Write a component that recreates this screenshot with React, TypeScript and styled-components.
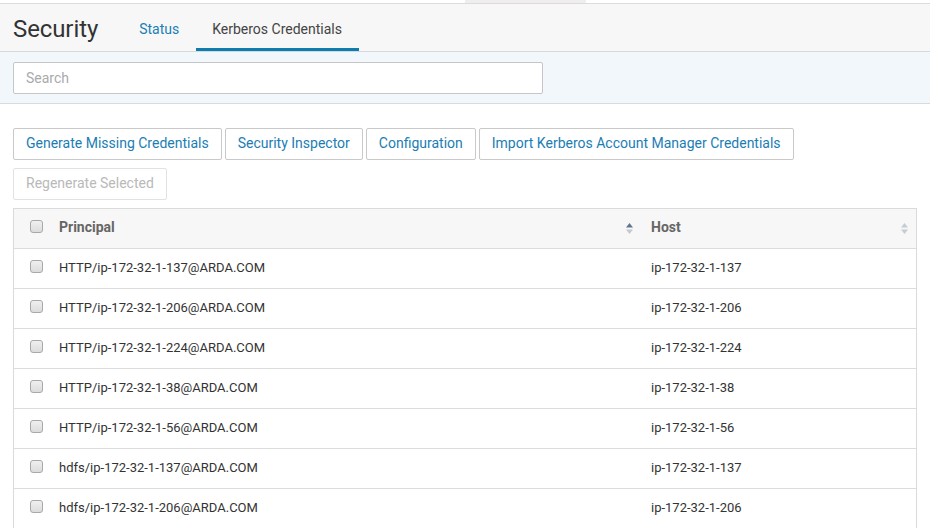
import React from "react";
import styled, { createGlobalStyle } from "styled-components";

const Global = createGlobalStyle`
  html, body { margin: 0; padding: 0; background: #fff; }
  body { font-family: Roboto, "Liberation Sans", Arial, sans-serif; color: #333; }
  * { box-sizing: border-box; }
`;

const Page = styled.div`
  width: 930px;
  height: 528px;
  overflow: hidden;
  background: #fff;
`;

const TopStrip = styled.div`
  height: 3px;
  display: flex;
  padding-left: 465px;
`;

const TopNub = styled.div`
  width: 121px;
  height: 3px;
  background: #efeded;
`;

const Header = styled.div`
  display: flex;
  align-items: stretch;
  height: 49px;
  background: #f7f7f7;
  border-top: 1px solid #dcdcdc;
  border-bottom: 1px solid #d9d9d9;
  padding-left: 13px;
`;

const Title = styled.h1`
  margin: 0 25px 0 0;
  padding-top: 2px;
  font-size: 24px;
  font-weight: 400;
  color: #333;
  line-height: 47px;
  height: 47px;
  letter-spacing: -0.1px;
`;

const Tab = styled.div<{ $active?: boolean }>`
  padding: 4px 17px 0 16px;
  font-size: 14px;
  line-height: 43px;
  height: 47px;
  color: ${(p) => (p.$active ? "#444" : "#1a7fb4")};
  border-bottom: 3px solid ${(p) => (p.$active ? "#0d7db0" : "transparent")};
`;

const SearchBand = styled.div`
  background: #f2f7fc;
  border-bottom: 1px solid #dadada;
  padding: 10px 13px 8px;
  height: 52px;
`;

const SearchInput = styled.input`
  width: 530px;
  height: 32px;
  border: 1px solid #c6c6c6;
  border-radius: 2px;
  background: #fff;
  font-family: Roboto, "Liberation Sans", Arial, sans-serif;
  font-size: 14px;
  padding: 0 12px;
  color: #333;
  outline: none;
  &::placeholder { color: #aaa; }
`;

const Content = styled.div`
  padding: 24px 13px 0 13px;
`;

const ButtonRow = styled.div`
  display: flex;
  gap: 3px;
  margin-bottom: 8px;
`;

const Button = styled.button<{ $disabled?: boolean }>`
  height: 32px;
  padding: 0 12px 2px;
  background: #fff;
  border: 1px solid ${(p) => (p.$disabled ? "#e2e2e2" : "#c9c9c9")};
  border-radius: 2px;
  font-family: Roboto, "Liberation Sans", Arial, sans-serif;
  font-size: 14px;
  color: ${(p) => (p.$disabled ? "#b9b9b9" : "#1b7db3")};
  cursor: pointer;
`;

const Table = styled.div`
  width: 904px;
  border: 1px solid #dadada;
  border-bottom: none;
`;

const Row = styled.div<{ $head?: boolean }>`
  display: grid;
  grid-template-columns: 35px 592px 1fr;
  height: 40px;
  align-items: center;
  background: ${(p) => (p.$head ? "#f7f7f7" : "#fff")};
  border-bottom: 1px solid #dcdcdc;
  font-size: ${(p) => (p.$head ? "14px" : "13px")};
  font-weight: ${(p) => (p.$head ? 700 : 400)};
  color: ${(p) => (p.$head ? "#666" : "#333")};
`;

const CheckCell = styled.div`
  padding-left: 16px;
  display: flex;
  align-items: center;
  height: 100%;
  padding-bottom: 5px;
`;

const Check = styled.span`
  display: inline-block;
  width: 13px;
  height: 13px;
  border: 1px solid #a8a8a8;
  border-radius: 3px;
  background: linear-gradient(#f0f0f0, #dcdcdc);
`;

const Cell = styled.div<{ $head?: boolean }>`
  padding: 0 8px 0 10px;
  display: flex;
  align-items: center;
  justify-content: space-between;
  height: 100%;
  padding-bottom: ${(p) => (p.$head ? "4px" : "2px")};
`;

const SortWrap = styled.span`
  display: inline-flex;
  flex-direction: column;
  margin-top: 4px;
`;

const SortIcon = ({ up }: { up?: boolean }) => (
  <SortWrap>
    <svg width="7" height="11" viewBox="0 0 7 11">
      <path d="M3.5 0 L7 4.5 L0 4.5 Z" fill={up ? "#5c7690" : "#c6ccd2"} />
      <path d="M0 6.5 L7 6.5 L3.5 11 Z" fill={up ? "#c8c8c8" : "#c6ccd2"} />
    </svg>
  </SortWrap>
);

const hosts = ["137", "206", "224", "38", "56"];
const rows: [string, string][] = [
  ...hosts.map((h) => [`HTTP/ip-172-32-1-${h}@ARDA.COM`, `ip-172-32-1-${h}`] as [string, string]),
  ["hdfs/ip-172-32-1-137@ARDA.COM", "ip-172-32-1-137"],
  ["hdfs/ip-172-32-1-206@ARDA.COM", "ip-172-32-1-206"],
];

export default function App() {
  return (
    <Page>
      <Global />
      <TopStrip>
        <TopNub />
      </TopStrip>
      <Header>
        <Title>Security</Title>
        <Tab>Status</Tab>
        <Tab $active>Kerberos Credentials</Tab>
      </Header>
      <SearchBand>
        <SearchInput placeholder="Search" />
      </SearchBand>
      <Content>
        <ButtonRow>
          <Button>Generate Missing Credentials</Button>
          <Button>Security Inspector</Button>
          <Button>Configuration</Button>
          <Button>Import Kerberos Account Manager Credentials</Button>
        </ButtonRow>
        <ButtonRow>
          <Button $disabled>Regenerate Selected</Button>
        </ButtonRow>
        <Table>
          <Row $head>
            <CheckCell>
              <Check />
            </CheckCell>
            <Cell $head>
              <span>Principal</span>
              <SortIcon up />
            </Cell>
            <Cell $head>
              <span>Host</span>
              <SortIcon />
            </Cell>
          </Row>
          {rows.map(([p, h]) => (
            <Row key={p}>
              <CheckCell>
                <Check />
              </CheckCell>
              <Cell>{p}</Cell>
              <Cell>{h}</Cell>
            </Row>
          ))}
        </Table>
      </Content>
    </Page>
  );
}
